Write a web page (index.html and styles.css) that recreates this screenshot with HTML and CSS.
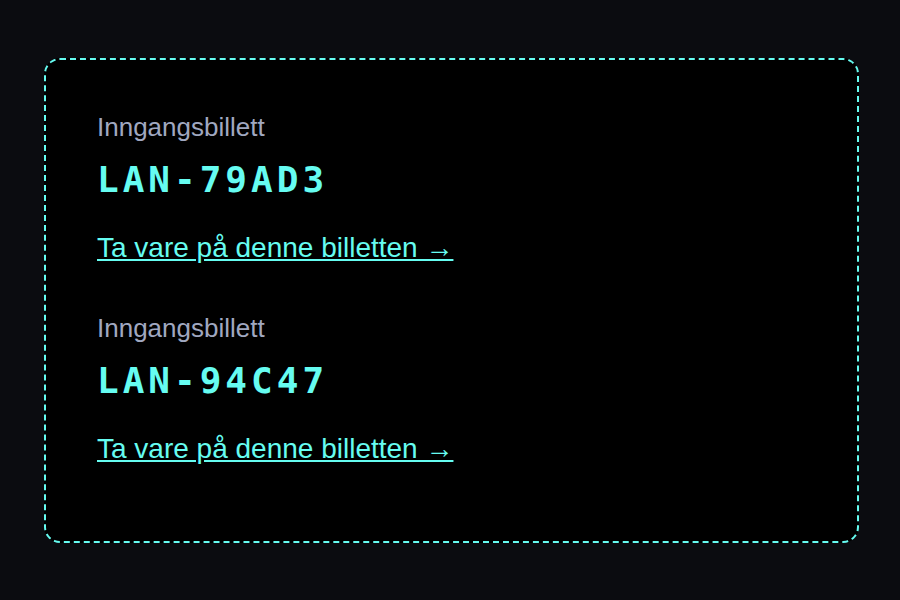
FILE: index.html
```html
<!DOCTYPE html>
<html lang="no">
<head>
    <meta charset="UTF-8">
    <meta name="viewport" content="width=device-width, initial-scale=1.0">
    <title>Billetter</title>
    <link rel="stylesheet" href="styles.css">
</head>
<body>
    <main class="tickets">
        <section class="ticket">
            <p class="ticket-label">Inngangsbillett</p>
            <p class="ticket-code">LAN-79AD3</p>
            <a class="ticket-link" href="#">Ta vare på denne billetten →</a>
        </section>
        <section class="ticket">
            <p class="ticket-label">Inngangsbillett</p>
            <p class="ticket-code">LAN-94C47</p>
            <a class="ticket-link" href="#">Ta vare på denne billetten →</a>
        </section>
    </main>
</body>
</html>
```
FILE: styles.css
```css
* {
    box-sizing: border-box;
}
body {
    margin: 0;
    padding: 58px 41px 56px 44px;
    background-color: #0b0c10;
    font-family: "Liberation Sans", Arial, sans-serif;
}
.tickets {
    display: flex;
    flex-direction: column;
    gap: 48px;
    padding: 51px 51px 76px;
    border: 2px dashed #66fcf1;
    border-radius: 16px;
    background-color: #000;
}
.ticket p {
    margin: 0;
}
.ticket-label {
    color: #a0a8c0;
    font-size: 26px;
    line-height: 32px;
}
.ticket-code {
    padding: 15px 0 30px;
    color: #66fcf1;
    font-family: "DejaVu Sans Mono", monospace;
    font-size: 36px;
    font-weight: bold;
    line-height: 44px;
    letter-spacing: 4px;
}
.ticket-link {
    display: inline-block;
    color: #66fcf1;
    font-size: 28px;
    line-height: 32px;
}
```
